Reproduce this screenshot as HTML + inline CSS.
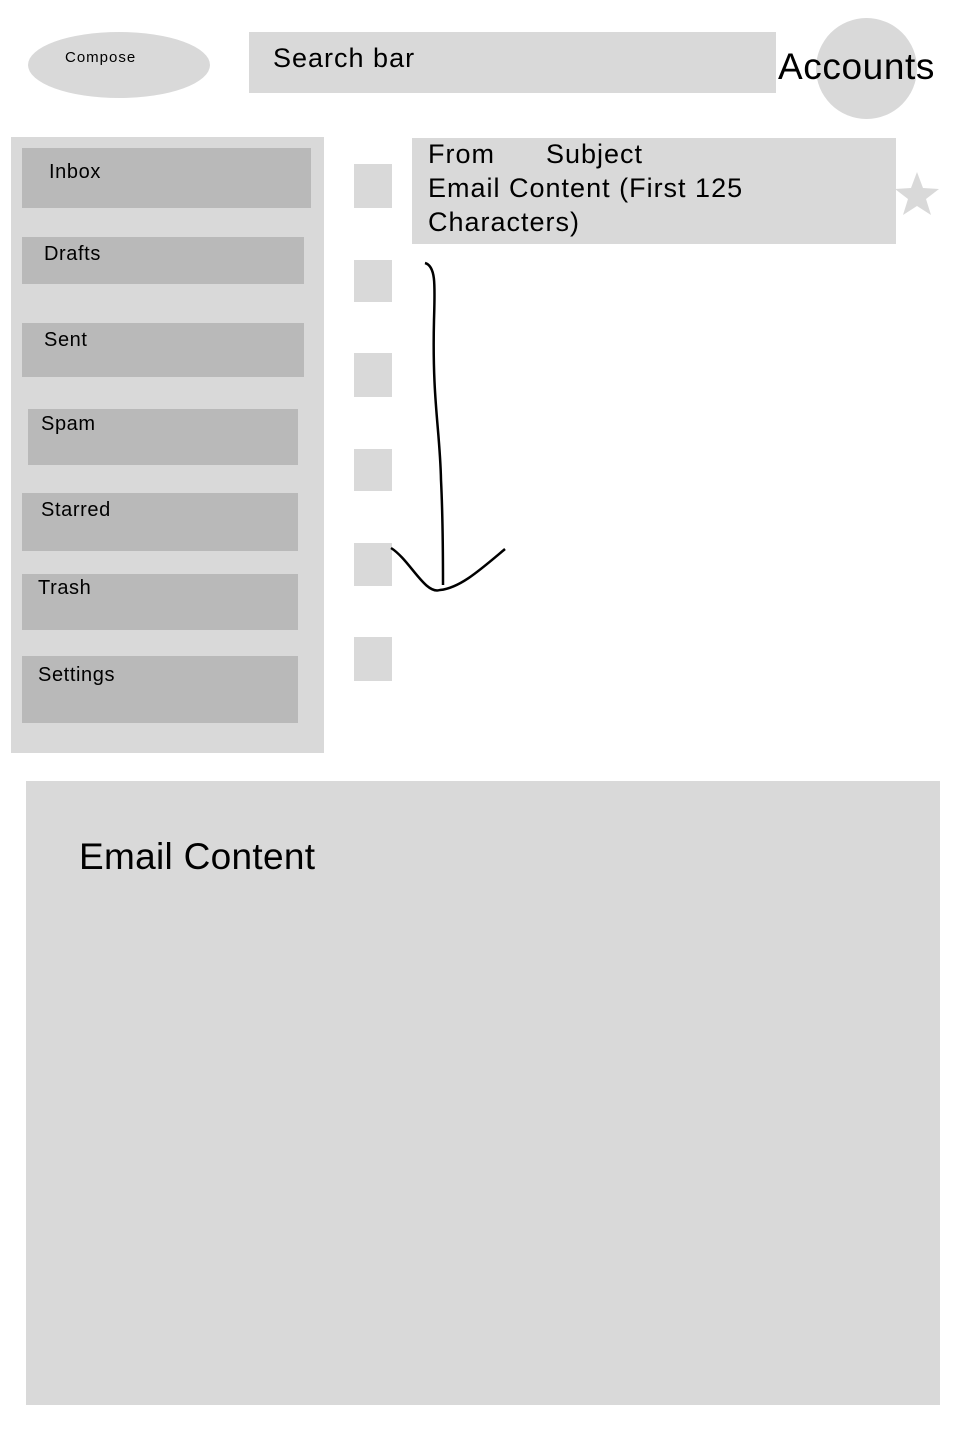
<!DOCTYPE html>
<html><head><meta charset="utf-8"><style>
*{margin:0;padding:0;box-sizing:border-box}
body{width:960px;height:1440px;background:#fff;position:relative;overflow:hidden;font-family:"Liberation Sans",sans-serif;color:#000}
.a{position:absolute}
.g{background:#d9d9d9}
.i{background:#b9b9b9;position:absolute;font-size:20px;letter-spacing:0.6px}
.c{position:absolute;left:354px;width:38px;background:#d9d9d9}
</style></head><body>
<div class="a g" style="left:28px;top:32px;width:182px;height:66px;border-radius:50%"></div>
<div class="a" style="left:65px;top:49px;font-size:15px;letter-spacing:1px">Compose</div>
<div class="a g" style="left:249px;top:32px;width:527px;height:61px"></div>
<div class="a" style="left:273px;top:43px;font-size:27px;letter-spacing:1px">Search bar</div>
<div class="a g" style="left:816px;top:18px;width:101px;height:101px;border-radius:50%"></div>
<div class="a" style="left:778px;top:46px;font-size:37px;letter-spacing:0.6px">Accounts</div>

<div class="a g" style="left:11px;top:137px;width:313px;height:616px"></div>
<div class="i" style="left:22px;top:148px;width:289px;height:60px"><span class="a" style="left:27px;top:13px">Inbox</span></div>
<div class="i" style="left:22px;top:237px;width:282px;height:47px"><span class="a" style="left:22px;top:6px">Drafts</span></div>
<div class="i" style="left:22px;top:323px;width:282px;height:54px"><span class="a" style="left:22px;top:6px">Sent</span></div>
<div class="i" style="left:28px;top:409px;width:270px;height:56px"><span class="a" style="left:13px;top:4px">Spam</span></div>
<div class="i" style="left:22px;top:493px;width:276px;height:58px"><span class="a" style="left:19px;top:6px">Starred</span></div>
<div class="i" style="left:22px;top:574px;width:276px;height:56px"><span class="a" style="left:16px;top:3px">Trash</span></div>
<div class="i" style="left:22px;top:656px;width:276px;height:67px"><span class="a" style="left:16px;top:8px">Settings</span></div>

<div class="c" style="top:164px;height:44px"></div>
<div class="c" style="top:260px;height:42px"></div>
<div class="c" style="top:353px;height:44px"></div>
<div class="c" style="top:449px;height:42px"></div>
<div class="c" style="top:543px;height:43px"></div>
<div class="c" style="top:637px;height:44px"></div>

<div class="a g" style="left:412px;top:138px;width:484px;height:106px"></div>
<div class="a" style="left:428px;top:137px;font-size:27px;line-height:34px;letter-spacing:1px">From&nbsp;&nbsp;&nbsp;&nbsp;&nbsp;&nbsp;Subject<br>Email Content (First 125<br>Characters)</div>
<svg class="a" style="left:0;top:0" width="960" height="800">
<polygon points="917,172 923,188 939,189 926,199 931,215 917,206 903,215 908,199 895,189 911,188" fill="#d9d9d9"/>
<path d="M425,263 C436,266 435,285 434,320 C432,400 440,430 441,480 C443,520 443,560 443,585" fill="none" stroke="#000" stroke-width="2.5"/>
<path d="M391,548 C410,560 425,595 440,590 C460,588 480,570 505,549" fill="none" stroke="#000" stroke-width="2.5"/>
</svg>

<div class="a g" style="left:26px;top:781px;width:914px;height:624px"></div>
<div class="a" style="left:79px;top:836px;font-size:37px;letter-spacing:0.3px">Email Content</div>
</body></html>
